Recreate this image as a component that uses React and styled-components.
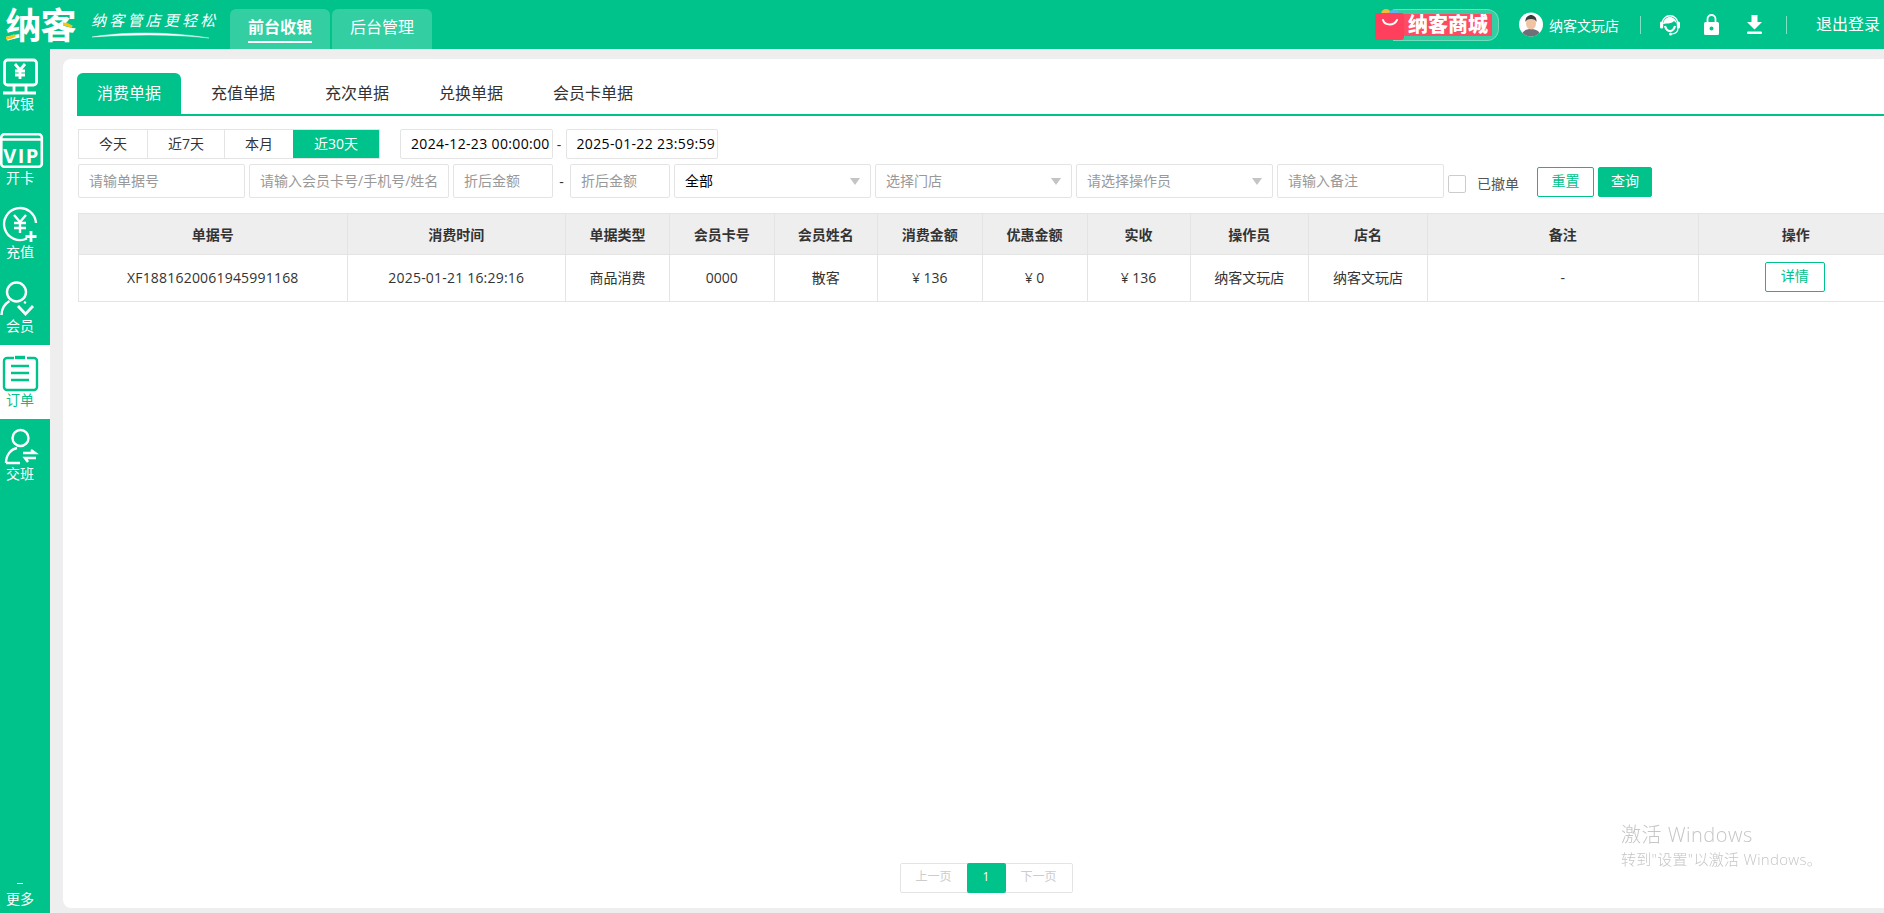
import React from "react";
import styled, { createGlobalStyle } from "styled-components";

const GREEN = "#00c28b";
const LINE = "#e4e4e4";

const Global = createGlobalStyle`
  html, body { margin: 0; padding: 0; overflow: hidden; background: #eee; }
  body { font-family: "Open Sans", "Noto Sans CJK SC", sans-serif; font-size: 14px; color: #333; }
  * { box-sizing: border-box; }
  input { font-family: inherit; }
`;

const Page = styled.div`
  width: 1884px; height: 913px; display: flex; flex-direction: column; overflow: hidden;
`;
const Header = styled.header`
  height: 49px; flex: none; background: ${GREEN}; display: flex; align-items: stretch; color: #fff; padding: 0 3px 0 5px;
`;
const Brand = styled.div`
  position: relative; width: 71px; display: flex; align-items: center; justify-content: center; padding-top: 2px;
  font-size: 36px; font-weight: 700; line-height: 1; letter-spacing: -1px; white-space: nowrap;
`;
const BrandMark = styled.svg`
  position: absolute; left: 0; top: 0;
`;
const Slogan = styled.div`
  margin-left: 15px; width: 125px; padding-top: 10px;
  font-size: 15px; font-weight: 400; font-style: italic; letter-spacing: 3.2px; line-height: 20px; white-space: nowrap;
`;
const Swoosh = styled.svg`
  display: block; margin-top: 2px;
`;
const NavTabs = styled.nav`
  margin-left: 14px; display: flex; gap: 2px; align-self: flex-end;
`;
const NavTab = styled.div`
  width: 100px; height: 40px; border-radius: 6px 6px 0 0; background: #33cea2; display: flex; justify-content: center; padding-top: 6px;
`;
const NavLabel = styled.span`
  font-size: 16px; line-height: 24px; height: 28px; font-weight: ${p => (p.$on ? 700 : 400)};
  border-bottom: ${p => (p.$on ? "2px solid #fff" : "none")};
`;
const HeadRight = styled.div`
  margin-left: auto; display: flex; align-items: center;
`;
const Mall = styled.div`
  width: 124px; height: 32px; position: relative; display: flex; align-items: center; margin-right: 20px;
  padding-left: 18px;
`;
const MallPill = styled.div`
  flex: 1; height: 32px; border-radius: 0 12px 12px 0; background: rgba(255,255,255,.2); border: 1px solid rgba(255,255,255,.3); border-left: none;
  display: flex; align-items: center;
`;
const MallText = styled.span`
  background: #ff4a63; height: 22px; line-height: 21px; padding: 0 4px 0 15px; font-size: 20px; font-weight: 900; white-space: nowrap; letter-spacing: 0;
`;
const MallBag = styled.svg`
  position: absolute; left: 0; top: 0;
`;
const Avatar = styled.svg` margin-right: 6px; flex: none; `;
const StoreName = styled.span`
  font-size: 14px; width: 70px; white-space: nowrap;
`;
const VBar = styled.i`
  width: 1px; height: 18px; background: rgba(255,255,255,.5); margin: 0 ${p => p.$r}px 0 ${p => p.$l}px;
`;
const HeadIcon = styled.svg`
  flex: none; margin-right: ${p => p.$r || 0}px;
`;
const Logout = styled.span`
  font-size: 16px; white-space: nowrap; width: 65px; margin-top: -3px;
`;

const Body = styled.div`
  flex: 1; display: flex; min-height: 0;
`;
const Sidebar = styled.aside`
  width: 50px; flex: none; background: ${GREEN}; display: flex; flex-direction: column;
`;
const SideItem = styled.div`
  height: 74px; padding: 8px 10px 0 0; display: flex; flex-direction: column; align-items: center;
  background: ${p => (p.$on ? "#fff" : "transparent")};
  color: ${p => (p.$on ? GREEN : "#fff")};
`;
const SideSvg = styled.svg`
  display: block; overflow: visible; flex: none;
`;
const SideLabel = styled.span`
  font-size: 14px; line-height: 16px; white-space: nowrap;
`;
const More = styled.div`
  margin-top: auto; padding: 0 10px 7px 0; color: #fff; display: flex; flex-direction: column; align-items: center; font-size: 14px; line-height: 15px;
`;
const Dash = styled.i`
  width: 6px; height: 1px; background: #fff; margin-bottom: 7px;
`;
const Content = styled.main`
  flex: 1; min-width: 0; background: #eee; padding: 10px 0 5px 13px;
`;
const Card = styled.section`
  width: 1846px; height: 100%; background: #fff; border-radius: 8px 0 0 8px; padding: 14px; display: flex; flex-direction: column;
`;
const Tabs = styled.div`
  display: flex; gap: 10px; border-bottom: 2px solid ${GREEN}; height: 43px; flex: none;
`;
const Tab = styled.div`
  height: 41px; padding: 0 20px; font-size: 16px; line-height: 41px; border-radius: 6px 6px 0 0;
  background: ${p => (p.$on ? GREEN : "transparent")}; color: ${p => (p.$on ? "#fff" : "#333")};
`;
const Filters = styled.div`
  margin: 13px 0 0 1px; display: flex; flex-direction: column; gap: 5px; flex: none;
`;
const Row = styled.div`
  display: flex; align-items: center; gap: ${p => p.$gap || 0}px;
`;
const Presets = styled.div`
  display: flex; height: 30px; border: 1px solid ${LINE}; margin-right: 20px;
`;
const Preset = styled.div`
  width: ${p => p.$w}px; text-align: center; line-height: 27px; font-size: 14px;
  border-left: ${p => (p.$first || p.$on ? "none" : `1px solid ${LINE}`)};
  background: ${p => (p.$on ? GREEN : "#fff")}; color: ${p => (p.$on ? "#fff" : "#333")};
`;
const DateBox = styled.input`
  width: 152.5px; height: 30px; border: 1px solid ${LINE}; border-radius: 2px; font-size: 14px; color: #000; padding: 0 0 1px 10px; outline: none; background: #fff; letter-spacing: .35px;
`;
const Sep = styled.span`
  width: ${p => p.$w}px; text-align: center; color: #333; flex: none;
`;
const TextField = styled.input`
  width: ${p => p.$w}px; height: 34px; flex: none; border: 1px solid ${LINE}; border-radius: 2px; padding: 0 0 2px 10px; font-size: 14px; outline: none; background: #fff; color: #333;
  &::placeholder { color: #999; opacity: 1; }
`;
const Select = styled.div`
  width: 197px; height: 34px; flex: none; border: 1px solid ${LINE}; border-radius: 2px; padding: 0 10px 2px; font-size: 14px; display: flex; align-items: center; justify-content: space-between;
  color: ${p => (p.$val ? "#000" : "#999")};
  &::after { content: ""; width: 0; height: 0; border-left: 5.5px solid transparent; border-right: 5.5px solid transparent; border-top: 7px solid #c4c4c4; margin-top: 2px; }
`;
const Check = styled.span`
  width: 18px; height: 18px; border: 1px solid #ccc; border-radius: 2px; flex: none; margin-top: 6px; background: #fff;
`;
const CheckLabel = styled.span`
  color: #555; font-size: 14px; margin: 4px 14px 0 7px; white-space: nowrap;
`;
const Btn = styled.div`
  height: 30px; width: ${p => p.$w}px; flex: none; border: 1px solid ${GREEN}; border-radius: 2px; text-align: center; line-height: 26px; font-size: 14px; margin-top: 2px;
  background: ${p => (p.$solid ? GREEN : "#fff")}; color: ${p => (p.$solid ? "#fff" : GREEN)};
`;
const Table = styled.div`
  margin: 15px 0 0 1px; width: 1816px; flex: none; border: solid ${LINE}; border-width: 1px 0 1px 1px;
`;
const TRow = styled.div`
  display: grid;
  grid-template-columns: 268.5px 218.5px 104px 104.5px 103.5px 104.5px 105px 103px 118.5px 119px 270.5px 1fr;
  height: ${p => (p.$head ? 41 : 46)}px;
  background: ${p => (p.$head ? "#eee" : "#fff")};
  border-bottom: ${p => (p.$head ? `1px solid ${LINE}` : "none")};
`;
const Cell = styled.div`
  display: flex; align-items: center; justify-content: center; border-right: 1px solid ${LINE};
  padding-bottom: ${p => (p.$head ? 0 : 2)}px;
  font-size: 14px; font-weight: ${p => (p.$head ? 700 : 400)}; color: #333; white-space: nowrap;
  letter-spacing: ${p => (p.$num ? ".2px" : 0)};
`;
const Detail = styled.div`
  width: 60px; height: 30px; margin-right: 2px; border: 1px solid ${GREEN}; border-radius: 2px; color: ${GREEN}; font-size: 14px; line-height: 26px; text-align: center;
`;
const Pager = styled.div`
  margin: auto auto 1px; height: 30px; display: flex; border: 1px solid ${LINE}; border-radius: 2px; flex: none;
`;
const PageBtn = styled.div`
  width: ${p => p.$w}px; text-align: center; font-size: 12px; color: ${p => (p.$on ? "#fff" : "#ccc")};
  background: ${p => (p.$on ? GREEN : "#fff")}; border-radius: 2px; margin: ${p => (p.$on ? "-1px 0" : 0)}; height: ${p => (p.$on ? 30 : 28)}px;
  line-height: ${p => (p.$on ? 28 : 26)}px;
`;
const Watermark = styled.div`
  position: fixed; left: 1621px; top: 822px; color: #c6c6c6; white-space: nowrap;
`;
const WmTitle = styled.div` font-size: 20px; line-height: 26px; font-weight: 300; letter-spacing: .5px; `;
const WmSub = styled.div` font-size: 15px; line-height: 20px; margin-top: 1px; font-weight: 300; letter-spacing: .3px; `;

const IconCash = () => (
  <SideSvg width="40" height="39" viewBox="0 0 40 39" fill="none" stroke="currentColor" strokeWidth="2.8">
    <rect x="4.500" y="3" width="32" height="25" rx="3" />
    <path d="M3 36h33M14 28v7M26 28v7" />
    <path d="M15 7l5 6 5-6M20 13v9M15 14h10M15 18h10" strokeWidth="2.8" />
  </SideSvg>
);
const IconVip = () => (
  <SideSvg width="40" height="39" viewBox="0 0 40 39" fill="none" stroke="currentColor" strokeWidth="2.6">
    <rect x="1.300" y="3.300" width="40.500" height="32.500" rx="3" />
    <path d="M1 8.500h41" />
    <text x="21.500" y="31.500" textAnchor="middle" fill="currentColor" stroke="none" fontFamily="'Open Sans', sans-serif" fontWeight="700" fontSize="20" letterSpacing="1.500">VIP</text>
  </SideSvg>
);
const IconRecharge = () => (
  <SideSvg width="40" height="39" viewBox="0 0 40 39" fill="none" stroke="currentColor" strokeWidth="2.4">
    <path d="M27 33.500A16 16 0 1 1 36 18" />
    <path d="M14 10l6 7 6-7M20 17v11M14 18h12M14 23h12" />
    <path d="M31 26v11M25.500 31.500h11" strokeWidth="2.800" />
  </SideSvg>
);
const IconMember = () => (
  <SideSvg width="40" height="39" viewBox="0 0 40 39" fill="none" stroke="currentColor" strokeWidth="2.4">
    <circle cx="16.500" cy="13" r="9.500" />
    <path d="M1.500 36c0-6 3-11 8-14M24 23l2 1" />
    <path d="M18 27l7.500 8 7.500-8" strokeWidth="2.800" />
  </SideSvg>
);
const IconOrder = () => (
  <SideSvg width="40" height="39" viewBox="0 0 40 39" fill="none" stroke="currentColor" strokeWidth="2.4">
    <path d="M14 5H7a3 3 0 0 0-3 3v26a3 3 0 0 0 3 3h27a3 3 0 0 0 3-3V8a3 3 0 0 0-3-3h-7" />
    <path d="M15 4.500h10" strokeWidth="3.400" />
    <path d="M11 13h18M11 20h18M11 27h18" />
  </SideSvg>
);
const IconShift = () => (
  <SideSvg width="40" height="39" viewBox="0 0 40 39" fill="none" stroke="currentColor" strokeWidth="2.4">
    <circle cx="20.500" cy="11" r="8" />
    <path d="M6 36c0-8 5-14 11-15M6 36h14" />
    <path d="M23 26h12l-4-3M36 31H25l3 4" strokeWidth="2.600" />
  </SideSvg>
);

const sideItems = [
  ["收银", IconCash], ["开卡", IconVip], ["充值", IconRecharge],
  ["会员", IconMember], ["订单", IconOrder], ["交班", IconShift],
];
const head = ["单据号", "消费时间", "单据类型", "会员卡号", "会员姓名", "消费金额", "优惠金额", "实收", "操作员", "店名", "备注", "操作"];
const row = ["XF1881620061945991168", "2025-01-21 16:29:16", "商品消费", "0000", "散客", "¥ 136", "¥ 0", "¥ 136", "纳客文玩店", "纳客文玩店", "-"];

export default function App() {
  return (
    <Page>
      <Global />
      <Header>
        <Brand>
          纳客
          <BrandMark width="71" height="49" viewBox="0 0 71 49" fill="none">
            <path d="M1 38c4 0 7-1 9-3" stroke="#f5c518" strokeWidth="3" />
            <path d="M58 24c3 0 6 1 9 3" stroke="#f5c518" strokeWidth="3" />
          </BrandMark>
        </Brand>
        <Slogan>
          纳客管店更轻松
          <Swoosh width="120" height="7" viewBox="0 0 120 7" fill="none">
            <path d="M1 5C30 0 75-1 118 6C80 2 40 2.500 1 5Z" fill="#fff" stroke="#fff" strokeWidth=".4" />
          </Swoosh>
        </Slogan>
        <NavTabs>
          <NavTab><NavLabel $on>前台收银</NavLabel></NavTab>
          <NavTab><NavLabel>后台管理</NavLabel></NavTab>
        </NavTabs>
        <HeadRight>
          <Mall>
            <MallBag width="30" height="31" viewBox="0 0 30 31">
              <circle cx="11" cy="5" r="5" fill="#f6b73c" />
              <circle cx="19" cy="6" r="5.500" fill="#5bb5e8" />
              <rect x="0" y="4" width="29" height="27" rx="3" fill="#ff3f5b" />
              <path d="M8 11c2 6 11 6 14 0" stroke="#fff" strokeWidth="2" fill="none" strokeLinecap="round" />
            </MallBag>
            <MallPill><MallText>纳客商城</MallText></MallPill>
          </Mall>
          <Avatar width="24" height="25" viewBox="0 0 24 25">
            <circle cx="12" cy="12.500" r="12" fill="#fff" />
            <path d="M3.500 21c1.500-3 5-4 8.500-4s7 1 8.500 4a12 12 0 0 1-17 0Z" fill="#6f6f78" />
            <ellipse cx="12" cy="11.500" rx="5" ry="6" fill="#f0c3a4" />
            <path d="M6.500 10c-.5-5 3-7 5.500-7s6 2 5.500 7c-1-2-2-3-5.500-3s-4.500 1-5.500 3Z" fill="#3c3c3c" />
          </Avatar>
          <StoreName>纳客文玩店</StoreName>
          <VBar $l={21} $r={19} />
          <HeadIcon $r={24} width="20" height="23" viewBox="0 0 20 23" fill="none">
            <path d="M2.200 10.500a7.800 7.800 0 0 1 15.600 0" stroke="#fff" strokeWidth="1.400" />
            <path d="M3 11c1-5 4-7 7-7s6 2 7 7c-1-1.500-2-2.500-3-3-1 1.500-5 3-7 2.500C5.500 10.500 4 11 3 11Z" fill="#fff" />
            <rect x="0" y="8.500" width="3.200" height="7" rx="1.500" fill="#fff" />
            <rect x="16.800" y="8.500" width="3.200" height="7" rx="1.500" fill="#fff" />
            <path d="M5 13c1 3.500 3 5 5 5s4-1.500 5-5" stroke="#fff" strokeWidth="2.200" />
            <path d="M18 15c0 3-2 5.500-6 6" stroke="#fff" strokeWidth="1.200" />
            <circle cx="10.500" cy="21" r="1.500" fill="#fff" />
          </HeadIcon>
          <HeadIcon $r={28} width="15" height="21" viewBox="0 0 15 21">
            <path d="M3.500 8V5a4 4 0 0 1 8 0v3" fill="none" stroke="#fff" strokeWidth="1.800" />
            <path fillRule="evenodd" d="M1.500 8h12A1.500 1.500 0 0 1 15 9.500v10a1.500 1.500 0 0 1-1.500 1.500h-12A1.500 1.500 0 0 1 0 19.500v-10A1.500 1.500 0 0 1 1.500 8ZM7.500 12.500a2 2 0 1 0 0 4 2 2 0 0 0 0-4Z" fill="#fff" />
          </HeadIcon>
          <HeadIcon width="15" height="20" viewBox="0 0 15 20" fill="#fff">
            <path d="M4.500 0h6v7H15l-7.500 7.500L0 7h4.500Z" />
            <rect x="0" y="16.500" width="15" height="2.500" rx="1" />
          </HeadIcon>
          <VBar $l={24} $r={29} />
          <Logout>退出登录</Logout>
        </HeadRight>
      </Header>
      <Body>
        <Sidebar>
          {sideItems.map(([label, Icon]) => (
            <SideItem key={label} $on={label === "订单"}>
              <Icon />
              <SideLabel>{label}</SideLabel>
            </SideItem>
          ))}
          <More><Dash />更多</More>
        </Sidebar>
        <Content>
          <Card>
            <Tabs>
              {["消费单据", "充值单据", "充次单据", "兑换单据", "会员卡单据"].map((t, i) => (
                <Tab key={t} $on={i === 0}>{t}</Tab>
              ))}
            </Tabs>
            <Filters>
              <Row>
                <Presets>
                  <Preset $first $w={68}>今天</Preset>
                  <Preset $w={77}>近7天</Preset>
                  <Preset $w={69}>本月</Preset>
                  <Preset $on $w={86}>近30天</Preset>
                </Presets>
                <DateBox readOnly value="2024-12-23 00:00:00" />
                <Sep $w={13}>-</Sep>
                <DateBox readOnly value="2025-01-22 23:59:59" />
              </Row>
              <Row $gap={4}>
                <TextField $w={167} placeholder="请输单据号" />
                <TextField $w={200} placeholder="请输入会员卡号/手机号/姓名" />
                <TextField $w={100} placeholder="折后金额" />
                <Sep $w={9}>-</Sep>
                <TextField $w={100} placeholder="折后金额" />
                <Select $val>全部</Select>
                <Select>选择门店</Select>
                <Select>请选择操作员</Select>
                <TextField $w={167} placeholder="请输入备注" />
                <Check />
                <CheckLabel>已撤单</CheckLabel>
                <Btn $w={57}>重置</Btn>
                <Btn $solid $w={54}>查询</Btn>
              </Row>
            </Filters>
            <Table>
              <TRow $head>
                {head.map(h => <Cell key={h} $head>{h}</Cell>)}
              </TRow>
              <TRow>
                {row.map((c, i) => <Cell key={i} $num={i < 2}>{c}</Cell>)}
                <Cell><Detail>详情</Detail></Cell>
              </TRow>
            </Table>
            <Pager>
              <PageBtn $w={66}>上一页</PageBtn>
              <PageBtn $on $w={39}>1</PageBtn>
              <PageBtn $w={66}>下一页</PageBtn>
            </Pager>
          </Card>
        </Content>
      </Body>
      <Watermark>
        <WmTitle>激活 Windows</WmTitle>
        <WmSub>转到"设置"以激活 Windows。</WmSub>
      </Watermark>
    </Page>
  );
}
